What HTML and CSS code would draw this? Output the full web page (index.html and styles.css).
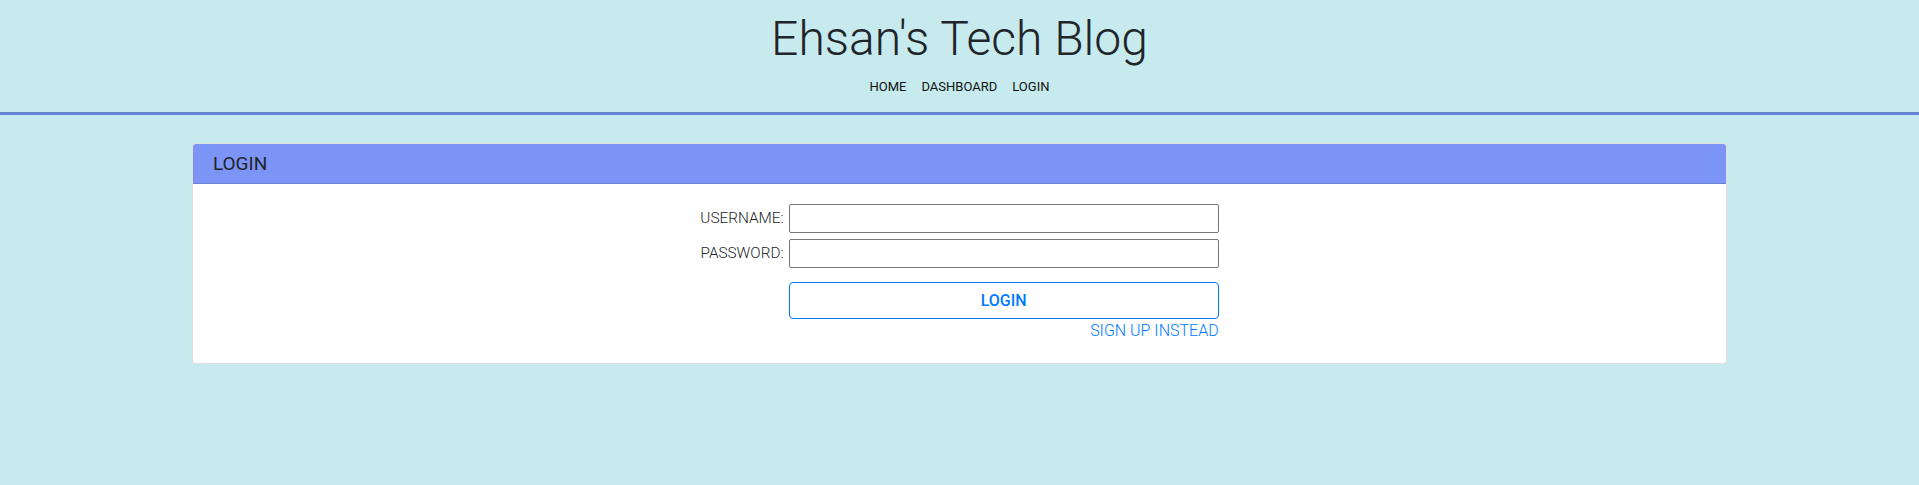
FILE: index.html
```html
<!DOCTYPE html>
<html lang="en">
<head>
<meta charset="utf-8">
<title>Ehsan's Tech Blog</title>
<link rel="stylesheet" href="styles.css">
</head>
<body>
<header class="site-header">
  <h1 class="site-title">Ehsan's Tech Blog</h1>
  <nav class="site-nav">
    <a href="#" class="nav-link">HOME</a>
    <a href="#" class="nav-link">DASHBOARD</a>
    <a href="#" class="nav-link">LOGIN</a>
  </nav>
</header>
<main class="main">
  <section class="card">
    <div class="card-header">LOGIN</div>
    <div class="card-body">
      <form class="login-form">
        <label class="form-label" for="username">USERNAME:</label>
        <input class="form-input" id="username" type="text">
        <label class="form-label" for="password">PASSWORD:</label>
        <input class="form-input" id="password" type="password">
        <button class="btn-login" type="button">LOGIN</button>
        <a href="#" class="signup-link">SIGN UP INSTEAD</a>
      </form>
    </div>
  </section>
</main>
</body>
</html>
```

FILE: styles.css
```css
* { box-sizing: border-box; }

html, body {
  margin: 0;
  padding: 0;
}

body {
  background: #c6eaee;
  font-family: Roboto, "Liberation Sans", sans-serif;
  color: #212529;
  font-size: 16px;
  line-height: 1.5;
  min-height: 485px;
}

.site-header {
  padding: 10px 0 15.4px;
  border-bottom: 3px solid #6884d6;
  text-align: center;
}

.site-title {
  margin: 0;
  font-size: 48px;
  line-height: 57.6px;
  font-weight: 300;
  color: #212529;
}

.site-nav {
  margin-top: 9px;
  display: flex;
  justify-content: center;
  gap: 15px;
  line-height: 20px;
  font-size: 13px;
}

.nav-link {
  color: #111;
  text-decoration: none;
}

.main {
  padding-top: 28px;
}

.card {
  width: 80%;
  margin: 0 auto;
  background: #fff;
  border: 1px solid rgba(0, 0, 0, 0.125);
  border-radius: 4px;
  overflow: hidden;
}

.card-header {
  background: #7b94f5;
  border-bottom: 1px solid rgba(0, 0, 0, 0.125);
  padding: 6px 20px 5px;
  line-height: 28px;
  font-size: 19px;
  color: #212529;
}

.card-body {
  padding: 20px 20px 20px;
}

.login-form {
  display: grid;
  grid-template-columns: auto 430px;
  justify-content: center;
  column-gap: 5px;
  row-gap: 6px;
  align-items: center;
}

.form-label {
  text-align: right;
  font-weight: 300;
  font-size: 15.3px;
  color: #212529;
  line-height: 24px;
}

.form-input {
  height: 29px;
  border: 1px solid #767676;
  border-radius: 2px;
  font: inherit;
  padding: 1px 3px;
  background: #fff;
}

.btn-login {
  grid-column: 2;
  margin-top: 8px;
  height: 37px;
  border: 1px solid #007bff;
  border-radius: 4px;
  background: #fff;
  color: #007bff;
  font-family: Roboto, "Liberation Sans", sans-serif;
  font-size: 16px;
  font-weight: 500;
  cursor: pointer;
}

.signup-link {
  grid-column: 2;
  margin-top: -6px;
  justify-self: end;
  color: #007bff;
  font-weight: 300;
  font-size: 16px;
  line-height: 24px;
  text-decoration: none;
}
```
